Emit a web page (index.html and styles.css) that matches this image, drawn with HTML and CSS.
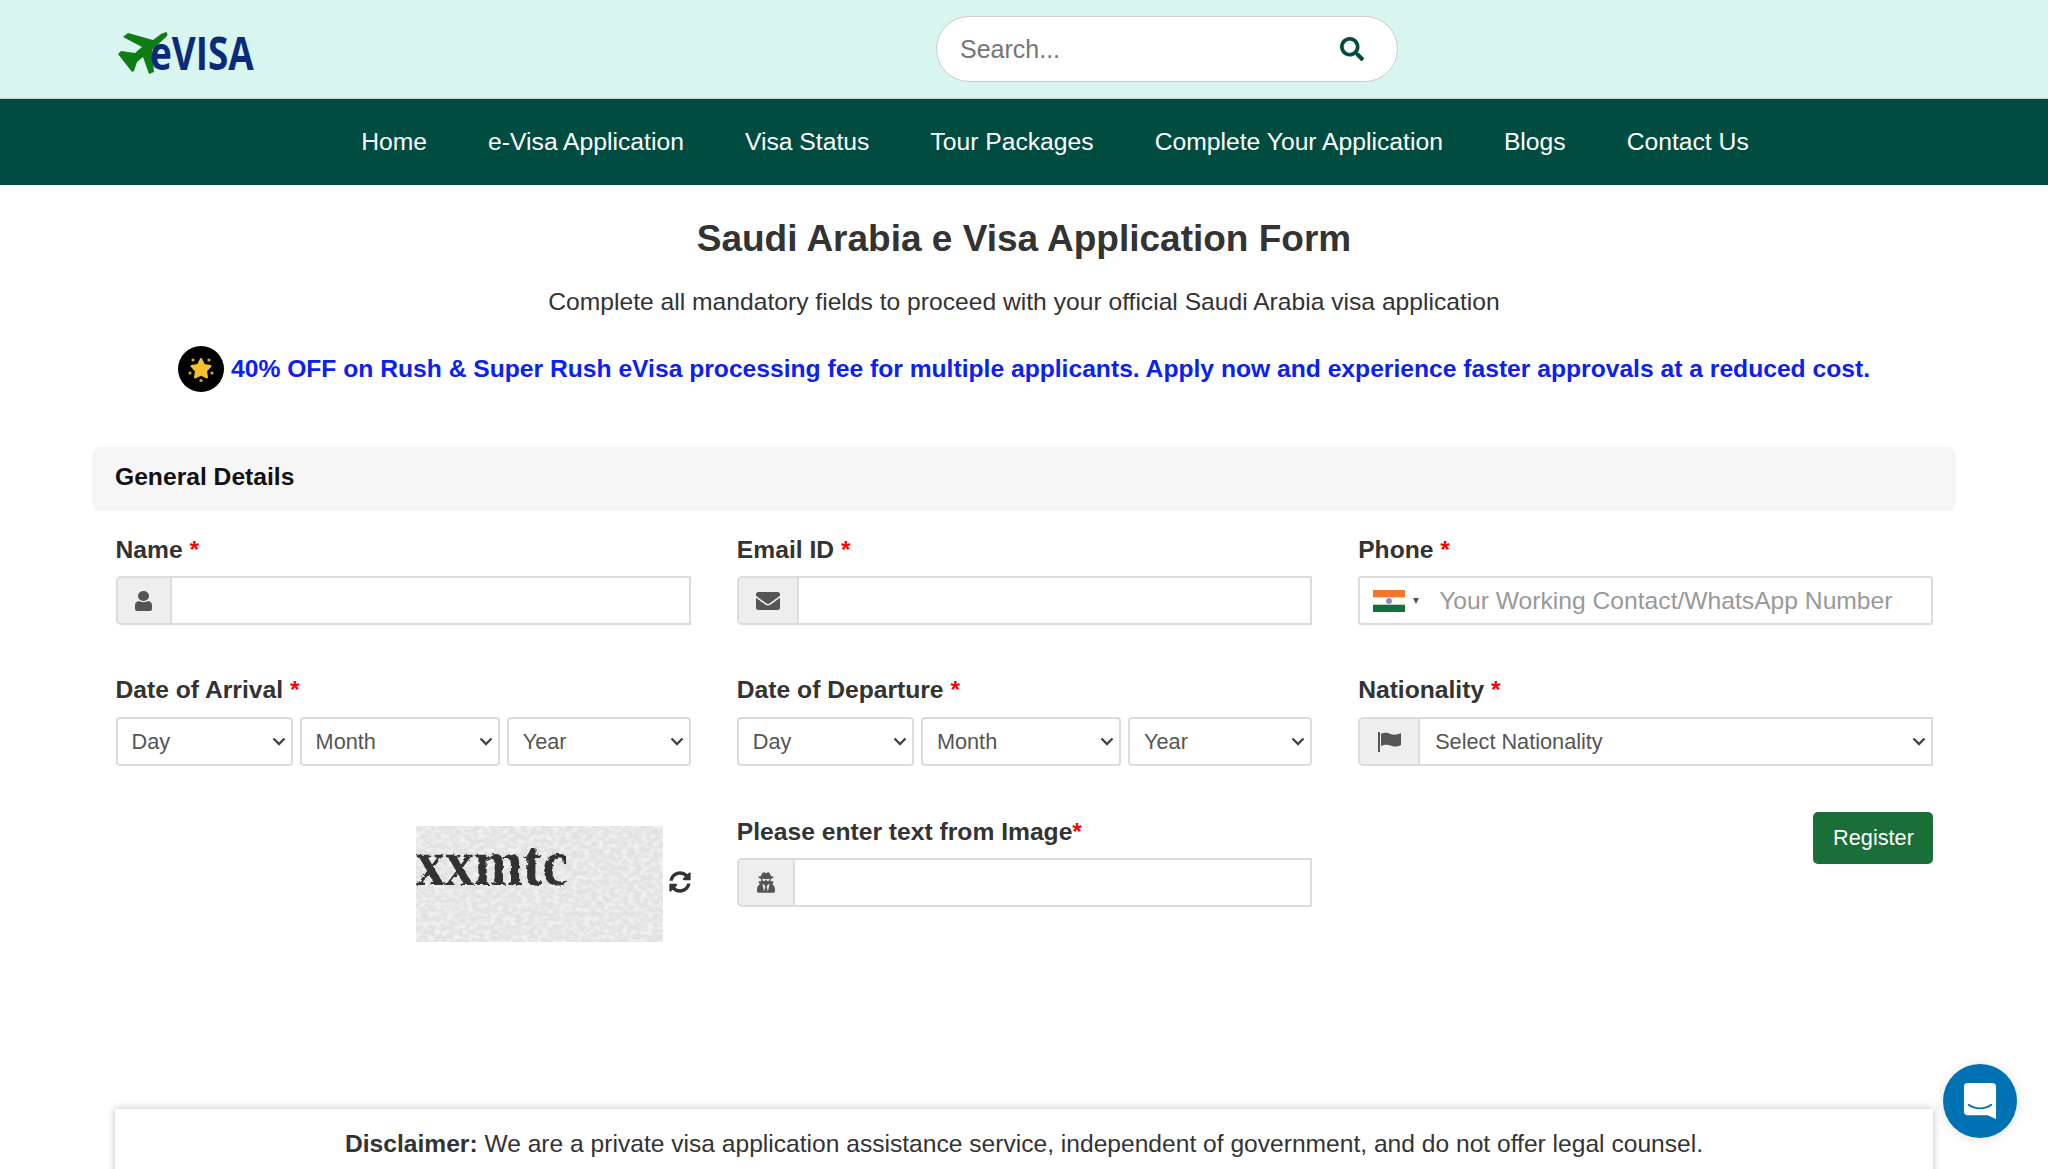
FILE: index.html
```html
<!DOCTYPE html>
<html lang="en">
<head>
    <meta charset="UTF-8">
    <meta name="viewport" content="width=device-width, initial-scale=1.0">
    <title>Saudi Arabia e Visa Application Form</title>
    <link rel="stylesheet" href="styles.css">
</head>
<body>
    <header class="topbar">
        <a class="logo" href="#">
            <svg width="170" height="68" viewBox="0 -8 170 68">
                <path class="logo-plane" d="M49 6 C51 7 51 10 48 12 L35 24 L37 46 L32 48 L26 31 L20 36 L17 45 L15 46 L1 28 L4 25 L18 27 L25 21 L6 11 L11 7 L36 14 L44 8 Z"/>
                <text x="42" y="44" class="logo-text" transform="scale(0.785 1)">eVISA</text>
            </svg>
        </a>
        <div class="search">
            <input type="text" placeholder="Search...">
            <svg class="search-icon" width="24" height="24" viewBox="0 0 512 512"><path d="M505 442.7L405.3 343c-4.5-4.5-10.6-7-17-7H372c27.6-35.3 44-79.7 44-128C416 93.1 322.9 0 208 0S0 93.1 0 208s93.1 208 208 208c48.3 0 92.7-16.4 128-44v16.3c0 6.4 2.5 12.5 7 17l99.7 99.7c9.4 9.4 24.6 9.4 33.9 0l28.3-28.3c9.4-9.4 9.4-24.6.1-34zM208 336c-70.7 0-128-57.2-128-128 0-70.7 57.2-128 128-128 70.7 0 128 57.2 128 128 0 70.7-57.2 128-128 128z"/></svg>
        </div>
    </header>

    <nav class="mainnav">
        <a href="#">Home</a>
        <a href="#">e-Visa Application</a>
        <a href="#">Visa Status</a>
        <a href="#">Tour Packages</a>
        <a href="#">Complete Your Application</a>
        <a href="#">Blogs</a>
        <a href="#">Contact Us</a>
    </nav>

    <main class="content">
        <h1>Saudi Arabia e Visa Application Form</h1>
        <p class="subtitle">Complete all mandatory fields to proceed with your official Saudi Arabia visa application</p>
        <p class="promo">
            <svg class="promo-icon" width="46" height="46" viewBox="0 0 46 46">
                <circle cx="23" cy="23" r="23" fill="#000"/>
                <path fill="#f5c02c" d="M23 13 L26 19 L32.5 20 L28 25 L29 31.5 L23 28.5 L17 31.5 L18 25 L13.5 20 L20 19 Z" stroke="#f5c02c" stroke-width="2" stroke-linejoin="round"/>
                <circle cx="15" cy="14" r="1.6" fill="#e3a51f"/>
                <circle cx="31" cy="14" r="1.6" fill="#e3a51f"/>
                <circle cx="12" cy="27" r="1.6" fill="#e3a51f"/>
                <circle cx="34" cy="27" r="1.6" fill="#e3a51f"/>
                <circle cx="23" cy="34.5" r="1.6" fill="#e3a51f"/>
            </svg>
            40% OFF on Rush &amp; Super Rush eVisa processing fee for multiple applicants. Apply now and experience faster approvals at a reduced cost.
        </p>

        <form class="visa-form">
            <h2 class="section-head">General Details</h2>
            <div class="form-grid">
                <div class="field">
                    <label>Name <span class="req">*</span></label>
                    <div class="input-group">
                        <span class="addon addon-name">
                            <svg width="17" height="20" viewBox="0 0 17 20"><ellipse cx="8.5" cy="5" rx="5.5" ry="5"/><path d="M0 18 V14 C0 12 1.5 10.5 4 10 C6 11.5 11 11.5 13 10 C15.5 10.5 17 12 17 14 V18 C17 19 16 20 15 20 H2 C1 20 0 19 0 18 Z"/></svg>
                        </span>
                        <input type="text">
                    </div>
                </div>
                <div class="field">
                    <label>Email ID <span class="req">*</span></label>
                    <div class="input-group">
                        <span class="addon addon-wide">
                            <svg width="24" height="24" viewBox="0 0 512 512"><path d="M502.3 190.8c3.9-3.1 9.7-.2 9.7 4.7V400c0 26.5-21.5 48-48 48H48c-26.5 0-48-21.5-48-48V195.6c0-5 5.7-7.8 9.7-4.7 22.4 17.4 52.1 39.5 154.1 113.6 21.1 15.4 56.7 47.8 92.2 47.6 35.7.3 72-32.8 92.3-47.6 102-74.1 131.6-96.3 154-113.7zM256 320c23.2.4 56.6-29.2 73.4-41.4 132.7-96.3 142.8-104.7 173.4-128.7 5.8-4.5 9.2-11.5 9.2-18.9v-19c0-26.5-21.5-48-48-48H48C21.5 64 0 85.5 0 112v19c0 7.4 3.4 14.3 9.2 18.9 30.6 23.9 40.7 32.4 173.4 128.7 16.8 12.2 50.2 41.8 73.4 41.4z"/></svg>
                        </span>
                        <input type="text">
                    </div>
                </div>
                <div class="field">
                    <label>Phone <span class="req">*</span></label>
                    <div class="phone-box">
                        <svg class="flag-in" width="32" height="22" viewBox="0 0 32 22">
                            <rect width="32" height="22" fill="#fff"/>
                            <rect width="32" height="7.3" fill="#f4752b"/>
                            <rect y="14.7" width="32" height="7.3" fill="#12703a"/>
                            <circle cx="16" cy="11" r="3" fill="#8f8fc4"/>
                        </svg>
                        <span class="caret"></span>
                        <input type="text" placeholder="Your Working Contact/WhatsApp Number">
                    </div>
                </div>

                <div class="field field-date">
                    <label>Date of Arrival <span class="req">*</span></label>
                    <div class="date-row">
                        <select><option>Day</option></select>
                        <select><option>Month</option></select>
                        <select><option>Year</option></select>
                    </div>
                </div>
                <div class="field field-date">
                    <label>Date of Departure <span class="req">*</span></label>
                    <div class="date-row">
                        <select><option>Day</option></select>
                        <select><option>Month</option></select>
                        <select><option>Year</option></select>
                    </div>
                </div>
                <div class="field field-date">
                    <label>Nationality <span class="req">*</span></label>
                    <div class="input-group">
                        <span class="addon addon-wide">
                            <svg width="23" height="20" viewBox="0 0 23 20"><path d="M0 0 H2 V20 H0 Z"/><path d="M3 2 C7 0 10 1 12.5 2 C15.5 3 19 3 23 1 V13 C19 15 15.5 15 12.5 13.5 C10 12.5 7 12 3 14 Z"/></svg>
                        </span>
                        <select><option>Select Nationality</option></select>
                    </div>
                </div>

                <div class="captcha-cell">
                    <svg class="captcha" width="247" height="116" viewBox="0 0 247 116">
                        <defs>
                            <filter id="paper" x="0" y="0" width="100%" height="100%">
                                <feTurbulence type="fractalNoise" baseFrequency="0.16 0.22" numOctaves="4" seed="7"/>
                                <feColorMatrix values="0 0 0 0 1  0 0 0 0 1  0 0 0 0 1  3 0 0 0 -1.2"/>
                            </filter>
                            <filter id="rough" x="-5%" y="-20%" width="110%" height="140%">
                                <feTurbulence type="fractalNoise" baseFrequency="0.25" numOctaves="2" seed="3" result="n"/>
                                <feDisplacementMap in="SourceGraphic" in2="n" scale="4"/>
                                <feGaussianBlur stdDeviation="0.6"/>
                            </filter>
                        </defs>
                        <rect width="247" height="116" fill="#e2e2e2"/>
                        <rect width="247" height="116" filter="url(#paper)" opacity="0.55"/>
                        <text x="0" y="59" class="captcha-text" filter="url(#rough)" textLength="152" lengthAdjust="spacingAndGlyphs">xxmtc</text>
                    </svg>
                    <svg class="refresh" width="22" height="22" viewBox="0 0 512 512"><path d="M370.72 133.28C339.458 104.008 298.888 87.962 255.848 88c-77.458.068-144.328 53.178-162.791 126.85-1.344 5.363-6.122 9.15-11.651 9.15H24.103c-7.498 0-13.194-6.807-11.807-14.176C33.933 94.924 134.813 8 256 8c66.448 0 126.791 26.136 171.315 68.685L463.03 40.97C478.149 25.851 504 36.559 504 57.941V192c0 13.255-10.745 24-24 24H345.941c-21.382 0-32.09-25.851-16.971-40.971l41.75-41.749zM32 296h134.059c21.382 0 32.09 25.851 16.971 40.971l-41.75 41.75c31.262 29.273 71.835 45.319 114.876 45.28 77.418-.07 144.315-53.144 162.787-126.849 1.344-5.363 6.122-9.15 11.651-9.15h57.304c7.498 0 13.194 6.807 11.807 14.176C478.067 417.076 377.187 504 256 504c-66.448 0-126.791-26.136-171.315-68.685L48.97 471.03C33.851 486.149 8 475.441 8 454.059V320c0-13.255 10.745-24 24-24z"/></svg>
                </div>
                <div class="field">
                    <label>Please enter text from Image<span class="req">*</span></label>
                    <div class="input-group">
                        <span class="addon addon-secret">
                            <svg width="18" height="21" viewBox="0 0 448 512"><path d="M383.9 308.3l23.9-62.6c4-10.5-3.7-21.7-15-21.7h-58.5c11-18.9 17.8-40.6 17.8-64v-.3c39.2-7.8 64-19.1 64-31.7 0-13.3-27.3-25.1-70.1-33-9.2-32.8-27-65.8-40.6-82.8-9.5-11.9-25.9-15.6-39.5-8.8l-27.6 13.8c-9 4.5-19.6 4.5-28.6 0L182.1 3.4c-13.6-6.8-30-3.1-39.5 8.8-13.5 17-31.4 50-40.6 82.8-42.7 7.9-70 19.7-70 33 0 12.6 24.8 23.9 64 31.7v.3c0 23.4 6.8 45.1 17.8 64H56.3c-11.5 0-19.2 11.7-14.7 22.3l25.8 60.2C27.3 329.8 0 372.7 0 422.4v44.8C0 491.9 20.1 512 44.8 512h358.4c24.7 0 44.8-20.1 44.8-44.8v-44.8c0-48.4-25.8-90.4-64.1-114.1zM176 480l-41.6-192 49.6 32 24 40-32 120zm96 0l-32-120 24-40 49.6-32L272 480zm41.7-298.5c-3.9 11.9-7 24.6-16.5 33.4-10.1 9.3-48 22.4-64-25-2.8-8.4-15.4-8.4-18.3 0-17 50.2-56 32.4-64 25-9.5-8.8-12.7-21.5-16.5-33.4-.8-2.5-6.3-5.7-6.3-5.8v-10.8c28.3 3.6 61 5.8 96 5.8s67.7-2.2 96-5.8v10.8c-.1.1-5.6 3.2-6.4 5.8z"/></svg>
                        </span>
                        <input type="text">
                    </div>
                </div>
                <div class="submit-cell">
                    <button type="button" class="btn-register">Register</button>
                </div>
            </div>
        </form>

        <div class="disclaimer"><b>Disclaimer:</b> We are a private visa application assistance service, independent of government, and do not offer legal counsel.</div>
    </main>

    <a class="chat" href="#">
        <svg width="34" height="38" viewBox="0 0 36 40">
            <path fill="#fff" d="M5 1 H31 C33.5 1 35 2.5 35 5 V39 L26 35 H5 C2.5 35 1 33.5 1 31 V5 C1 2.5 2.5 1 5 1 Z"/>
            <path fill="none" stroke="#0071b2" stroke-width="2" stroke-linecap="round" d="M6 24 C13 29 23 29 30 24"/>
        </svg>
    </a>
</body>
</html>
```

FILE: styles.css
```css
* {
    box-sizing: border-box;
}
html, body {
    height: 100%;
    overflow: hidden;
}
body {
    margin: 0;
    font-family: "Liberation Sans", Arial, sans-serif;
    color: #333;
    background-color: #fff;
}
a {
    text-decoration: none;
}

/* top bar */
.topbar {
    position: relative;
    display: flex;
    align-items: center;
    justify-content: center;
    height: 99px;
    background-color: #d9f5f0;
    border-bottom: 1px solid #c4d4d0;
}
.logo {
    position: absolute;
    left: 117px;
    top: 18px;
}
.logo-text {
    font-family: "Open Sans", sans-serif;
    font-weight: 700;
    font-size: 47px;
    fill: #0b2a78;
}
.logo-plane {
    fill: #0f7c16;
}
.search {
    display: flex;
    align-items: center;
    width: 462px;
    height: 66px;
    margin-left: 286px;
    padding: 0 33px 0 23px;
    background-color: #fff;
    border: 1px solid #ccc;
    border-radius: 33px;
}
.search input {
    flex: 1;
    min-width: 0;
    padding: 0;
    border: none;
    outline: none;
    background: none;
    font-family: inherit;
    font-size: 25px;
    color: #333;
}
.search input::placeholder {
    color: #757575;
}
.search-icon {
    fill: #004d40;
}

/* nav */
.mainnav {
    display: flex;
    justify-content: center;
    align-items: center;
    gap: 61px;
    height: 86px;
    padding-left: 62px;
    background-color: #004c40;
}
.mainnav a {
    color: #fff;
    font-size: 24.7px;
}

/* page */
.content {
    padding: 0 92px;
}
h1 {
    margin: 31px 0 0;
    text-align: center;
    font-size: 37px;
    line-height: 46px;
    font-weight: bold;
    color: #333;
}
.subtitle {
    margin: 22px 0 0;
    text-align: center;
    font-size: 24.65px;
    line-height: 36px;
    color: #333;
}
.promo {
    display: flex;
    align-items: center;
    justify-content: center;
    gap: 7px;
    margin: 26px 0 0;
    font-size: 24.65px;
    font-weight: bold;
    color: #0a20f5;
}
.promo-icon {
    flex: none;
}
.visa-form {
    margin-top: 55px;
}
.section-head {
    margin: 0;
    height: 64px;
    padding: 0 23px;
    line-height: 60px;
    font-size: 24.65px;
    color: #111;
    background-color: #f6f6f6;
    border-radius: 8px;
}
.form-grid {
    display: grid;
    grid-template-columns: repeat(3, 1fr);
    column-gap: 46px;
    padding: 21px 22.5px 0 23.5px;
}
.field {
    margin-bottom: 47px;
}
.field-date {
    margin-bottom: 48px;
}
.field label {
    display: block;
    height: 36px;
    margin-bottom: 8px;
    font-size: 24.65px;
    line-height: 36px;
    font-weight: bold;
    color: #333;
}
.field-date label {
    margin-bottom: 9px;
}
.req {
    color: #f00;
}

/* inputs */
.input-group {
    display: flex;
    height: 49px;
}
.input-group input,
.input-group select {
    flex: 1;
    min-width: 0;
    height: 100%;
    border: 2px solid #dcdcdc;
    border-left: none;
    background-color: #fff;
    font-family: inherit;
    font-size: 21.7px;
    color: #555;
    padding: 0 15px;
    border-radius: 0;
}
select {
    appearance: none;
    background-image: url("data:image/svg+xml,%3Csvg xmlns='http://www.w3.org/2000/svg' width='14' height='9' viewBox='0 0 14 9'%3E%3Cpath d='M1.5 1.5 L7 7 L12.5 1.5' fill='none' stroke='%23444' stroke-width='2.4'/%3E%3C/svg%3E");
    background-repeat: no-repeat;
    background-position: right 5px center;
}
.addon {
    display: flex;
    flex: none;
    align-items: center;
    justify-content: center;
    background-color: #eee;
    border: 2px solid #dcdcdc;
    border-radius: 5px 0 0 5px;
}
.addon svg {
    fill: #555;
}
.addon-name {
    width: 56px;
}
.addon-wide {
    width: 62px;
}
.addon-secret {
    width: 58px;
}
.phone-box {
    display: flex;
    align-items: center;
    height: 49px;
    padding-left: 13px;
    border: 2px solid #dcdcdc;
    border-radius: 3px;
}
.flag-in {
    flex: none;
}
.caret {
    width: 0;
    height: 0;
    margin-left: 8px;
    border-left: 3.5px solid transparent;
    border-right: 3.5px solid transparent;
    border-top: 6px solid #555;
}
.phone-box input {
    flex: 1;
    min-width: 0;
    height: 100%;
    border: none;
    outline: none;
    font-family: inherit;
    font-size: 24.65px;
    margin-left: 20px;
    padding: 0;
    color: #555;
}
.phone-box input::placeholder {
    color: #999;
}
.date-row {
    display: grid;
    grid-template-columns: 177fr 200fr 184fr;
    column-gap: 7px;
    height: 49px;
}
.date-row select {
    width: 100%;
    height: 100%;
    padding: 0 14px;
    border: 2px solid #dcdcdc;
    border-radius: 4px;
    background-color: #fff;
    font-family: inherit;
    font-size: 21.7px;
    color: #555;
}

/* captcha row */
.captcha-cell {
    display: flex;
    align-items: center;
    justify-content: flex-end;
    gap: 6px;
    height: 116px;
    margin-top: 12px;
}
.captcha-text {
    font-family: "Liberation Serif", serif;
    font-weight: bold;
    font-size: 66px;
    fill: #333;
}
.refresh {
    margin-top: -4px;
    fill: #333;
}
.submit-cell {
    display: flex;
    justify-content: flex-end;
    align-items: flex-start;
}
.btn-register {
    width: 120px;
    height: 52px;
    margin-top: -2px;
    border: none;
    border-radius: 5px;
    background-color: #1a6e37;
    color: #fff;
    font-family: inherit;
    font-size: 21.7px;
    cursor: pointer;
}

/* disclaimer */
.disclaimer {
    margin: 155px 23px 0;
    padding: 17px 20px 40px;
    text-align: center;
    font-size: 24.6px;
    line-height: 36px;
    background-color: #fff;
    box-shadow: 0 0 8px rgba(0, 0, 0, 0.25);
}

/* chat bubble */
.chat {
    position: fixed;
    right: 31px;
    bottom: 31px;
    display: flex;
    align-items: center;
    justify-content: center;
    width: 74px;
    height: 74px;
    border-radius: 50%;
    background-color: #0071b2;
    box-shadow: 0 1px 12px rgba(0, 0, 0, 0.12);
}
```
